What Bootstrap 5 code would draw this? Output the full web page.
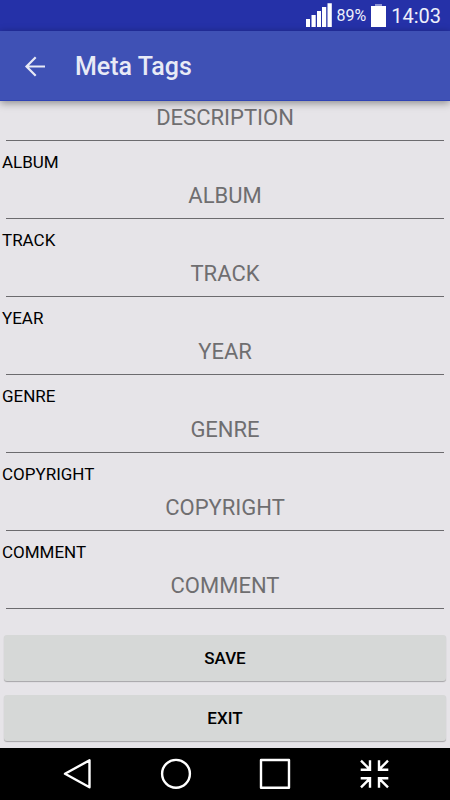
<!DOCTYPE html>
<html lang="en">
<head>
<meta charset="utf-8">
<meta name="viewport" content="width=device-width, initial-scale=1">
<title>Meta Tags</title>
<link href="https://cdn.jsdelivr.net/npm/bootstrap@5.3.0/dist/css/bootstrap.min.css" rel="stylesheet">
<style>
body { font-family: Roboto, "Liberation Sans", sans-serif; background: #e6e4e8; color: #000; }
.status-bar { background: #2531a8; height: 31px; color: #eef0fb; font-size: 20px; line-height: 32px; padding-right: 9px; }
.battery-level { font-size: 16px; }
.app-bar { background: #3f51b5; height: 70px; color: #e8eaf6; box-shadow: 0 2px 8px rgba(0,0,0,.4); border-bottom: 1px solid #2f43b4; padding: 3px 24px 0; }
.app-title { font-size: 25px; line-height: 32px; font-weight: 500; padding-left: 5px; }
.back-btn { color: inherit; line-height: 0; }
.tag-form { min-height: 0; }
.tag-field { padding-top: 10px; }
.tag-label { font-size: 17px; line-height: 22px; padding-left: 2px; }
.tag-line { padding: 0 6px; }
.tag-input { font-size: 22px; line-height: 28px; height: 46px; color: #222; padding: 0; border-bottom: 1px solid #6c6b6e !important; }
.tag-input::placeholder { color: #6f6e70; opacity: 1; }
.tag-input:focus { background: transparent; box-shadow: none; }
.actions { gap: 14px; padding: 26px 4px 7px; }
.action-btn { --bs-btn-bg: #d6d8d7; --bs-btn-color: #000; --bs-btn-hover-bg: #cbcdcc; --bs-btn-active-bg: #c0c2c1; height: 46px; border: 0; border-radius: 3px; font-size: 17px; line-height: 22px; font-weight: 500; box-shadow: 0 1px 1px rgba(0,0,0,.28); }
.nav-keys { height: 52px; background: #000; padding: 0 27px; }
.key-btn { line-height: 0; color: #fff; }
</style>
</head>
<body>
<div class="d-flex flex-column vh-100 overflow-hidden">
  <header class="position-relative z-1 flex-shrink-0">
    <div class="status-bar d-flex justify-content-end">
      <svg width="26" height="28" viewBox="0 0 26 28" fill="#fff" aria-hidden="true"><path d="M0 19h4v8H0zM5.500 15h4.200v12H5.500zM11 11h4v16h-4zM16 7h4.200v20H16zM21.500 3.300h4.300V27h-4.300z"/></svg>
      <span class="battery-level ms-1">89%</span>
      <svg class="ms-1" width="17" height="28" viewBox="0 0 17 28" aria-hidden="true"><path d="M5 4h7v3H5z" fill="#8d94d3"/><path d="M1 6h15v21H1z" fill="#fff"/></svg>
      <span class="ms-1">14:03</span>
    </div>
    <nav class="app-bar d-flex align-items-center" aria-label="App bar">
      <button type="button" class="btn border-0 p-0 back-btn" aria-label="Back"><svg width="22" height="22" viewBox="0 0 22 22" fill="none" stroke="currentColor" stroke-width="2.200"><path d="M21 10.500H2.500M11.700 1.300 2.500 10.500l9.200 9.200"/></svg></button>
      <h1 class="app-title mb-0 ms-4">Meta Tags</h1>
    </nav>
  </header>
  <form class="tag-form flex-grow-1 d-flex flex-column justify-content-end overflow-hidden">
    <div class="tag-line"><input class="tag-input form-control rounded-0 border-0 bg-transparent text-center" type="text" placeholder="DESCRIPTION" aria-label="Description"></div>
    <div class="tag-field"><label class="tag-label d-block" for="album">ALBUM</label><div class="tag-line"><input class="tag-input form-control rounded-0 border-0 bg-transparent text-center" type="text" id="album" placeholder="ALBUM"></div></div>
    <div class="tag-field"><label class="tag-label d-block" for="track">TRACK</label><div class="tag-line"><input class="tag-input form-control rounded-0 border-0 bg-transparent text-center" type="text" id="track" placeholder="TRACK"></div></div>
    <div class="tag-field"><label class="tag-label d-block" for="year">YEAR</label><div class="tag-line"><input class="tag-input form-control rounded-0 border-0 bg-transparent text-center" type="text" id="year" placeholder="YEAR"></div></div>
    <div class="tag-field"><label class="tag-label d-block" for="genre">GENRE</label><div class="tag-line"><input class="tag-input form-control rounded-0 border-0 bg-transparent text-center" type="text" id="genre" placeholder="GENRE"></div></div>
    <div class="tag-field"><label class="tag-label d-block" for="copyright">COPYRIGHT</label><div class="tag-line"><input class="tag-input form-control rounded-0 border-0 bg-transparent text-center" type="text" id="copyright" placeholder="COPYRIGHT"></div></div>
    <div class="tag-field"><label class="tag-label d-block" for="comment">COMMENT</label><div class="tag-line"><input class="tag-input form-control rounded-0 border-0 bg-transparent text-center" type="text" id="comment" placeholder="COMMENT"></div></div>
    <div class="actions d-grid">
      <button type="button" class="btn action-btn">SAVE</button>
      <button type="button" class="btn action-btn">EXIT</button>
    </div>
  </form>
  <nav class="nav-keys d-flex align-items-center flex-shrink-0" aria-label="System">
    <button type="button" class="btn border-0 p-0 key-btn col-3" aria-label="Back"><svg width="32" height="32" viewBox="0 0 32 32" fill="none" stroke="currentColor" stroke-width="2.400" stroke-linejoin="round"><path d="M28.500 2.300v27L4 15.800z"/></svg></button>
    <button type="button" class="btn border-0 p-0 key-btn col-3" aria-label="Home"><svg width="32" height="32" viewBox="0 0 32 32" fill="none" stroke="currentColor" stroke-width="2.400"><circle cx="16" cy="15.800" r="13.900"/></svg></button>
    <button type="button" class="btn border-0 p-0 key-btn col-3" aria-label="Recent apps"><svg width="32" height="32" viewBox="0 0 32 32" fill="none" stroke="currentColor" stroke-width="2.400" stroke-linejoin="round"><path d="M2 2h28v27.800H2z"/></svg></button>
    <button type="button" class="btn border-0 p-0 key-btn col-3" aria-label="Shrink"><svg width="32" height="32" viewBox="0 0 32 32" fill="none" stroke="currentColor" stroke-width="2.400"><path d="M3 2.700l8.500 8.500M2.700 11.800h9.300V2.300M30 2.700l-8.500 8.500M30.300 11.800H21V2.300M3 29.300l8.500-8.500M2.700 20.200h9.300v9.500M30 29.300l-8.500-8.500M30.300 20.200H21v9.500"/></svg></button>
  </nav>
</div>
<script src="https://cdn.jsdelivr.net/npm/bootstrap@5.3.0/dist/js/bootstrap.bundle.min.js"></script>
</body>
</html>
